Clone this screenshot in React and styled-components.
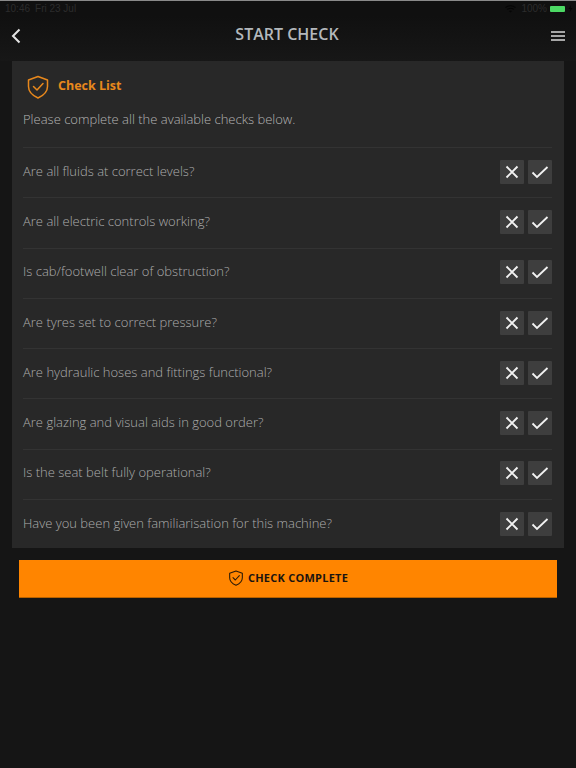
import React from "react";
import styled, { createGlobalStyle } from "styled-components";

const Global = createGlobalStyle`
  html, body { margin: 0; padding: 0; background: #151515; }
  #root { width: 576px; height: 768px; overflow: hidden; }
`;
const Page = styled.div`
  width: 576px; height: 768px; background: #151515; display: flex; flex-direction: column;
  font-family: "Open Sans", Lato, sans-serif; border-top: 1px solid #8a8a8a; box-sizing: border-box;
`;
const StatusBar = styled.div`
  height: 15px; padding: 0 3px 0 5px; display: flex; align-items: center; justify-content: space-between;
  font-family: "Liberation Sans", sans-serif; font-size: 10px; color: #2c2c2c; background: #101010;
`;
const StatusGroup = styled.div`display: flex; align-items: center; gap: 5px;`;
const TightGroup = styled.div`display: flex; align-items: center; gap: 3px;`;
const Battery = styled.span`
  width: 15px; height: 6px; background: #4cd964; border-radius: 1px; display: block;
`;
const Header = styled.header`
  height: 45px; display: flex; align-items: center; justify-content: space-between; padding: 0 7px 9px 5px;
  background: linear-gradient(#101010, #171717); box-sizing: border-box;
`;
const Title = styled.h1`
  margin: 0; font-size: 16px; font-weight: 600; color: #b4b8bc;
`;
const IconSlot = styled.div`width: 22px; height: 22px; display: flex; align-items: center; justify-content: center; margin-top: 4px;`;
const Card = styled.section`
  margin: 0 12px; height: 487px; flex: none; background: #282828; padding: 0 12px 0 11px; box-sizing: border-box;
  display: flex; flex-direction: column;
`;
const CardHead = styled.div`display: flex; flex: none; align-items: center; gap: 8px; height: 50px; padding: 2px 0 0 3px; box-sizing: border-box;`;
const CardTitle = styled.h2`margin: -3px 0 0; font-size: 12.5px; font-weight: 700; color: #e8881c;`;
const Intro = styled.p`
  margin: 0; height: 36px; flex: none; font-size: 13px; font-weight: 300; color: #b4b4b4; line-height: 17px;
  border-bottom: 1px solid #333; box-sizing: content-box;
`;
const Row = styled.div`
  height: 47.3px; padding-bottom: 2px; flex: none; display: flex; align-items: center; justify-content: space-between;
  border-bottom: ${p => (p.$last ? "none" : "1px solid #333")};
`;
const Question = styled.span`font-size: 13px; font-weight: 300; color: #acacac; padding-bottom: 2px;`;
const Actions = styled.div`display: flex; gap: 4px;`;
const Toggle = styled.button`
  width: 24px; height: 24px; padding: 0; border: 0; border-radius: 1px; background: #3e3e3e;
  display: flex; align-items: center; justify-content: center;
`;
const CompleteButton = styled.button`
  margin: 12px 19px 0; height: 38px; flex: none; border: 0; border-bottom: 1px solid #b86200; background: #ff8500;
  display: flex; align-items: center; justify-content: center; gap: 4px; padding: 0 0 2px;
  font-family: "Open Sans", sans-serif; font-weight: 700; font-size: 11px; letter-spacing: 0.25px; color: #1b1410;
`;

const Shield = ({ size, color, sw }) => (
  <svg width={size} height={size} viewBox="0 0 24 24" fill="none" stroke={color} strokeWidth={sw} strokeLinejoin="round" strokeLinecap="round">
    <path d="M12 1.5 L21.5 5 V11.5 C21.5 17 17.5 20.5 12 23 C6.5 20.5 2.5 17 2.5 11.5 V5 Z" />
    <path d="M7.5 11.5 L11 15 L17 8.5" />
  </svg>
);
const Cross = () => (
  <svg width="14" height="14" viewBox="0 0 14 14" stroke="#f2f2f2" strokeWidth="1.9" fill="none">
    <path d="M1.5 1.5 L12.5 12.5 M12.5 1.5 L1.5 12.5" />
  </svg>
);
const Tick = () => (
  <svg width="18" height="14" viewBox="0 0 18 14" stroke="#f2f2f2" strokeWidth="1.8" fill="none">
    <path d="M1.5 7.5 L6 12 L16.5 2" />
  </svg>
);

const questions = [
  "Are all fluids at correct levels?",
  "Are all electric controls working?",
  "Is cab/footwell clear of obstruction?",
  "Are tyres set to correct pressure?",
  "Are hydraulic hoses and fittings functional?",
  "Are glazing and visual aids in good order?",
  "Is the seat belt fully operational?",
  "Have you been given familiarisation for this machine?",
];

export default function App() {
  return (
    <Page>
      <Global />
      <StatusBar>
        <StatusGroup>
          <span>10:46</span>
          <span>Fri 23 Jul</span>
        </StatusGroup>
        <StatusGroup>
          <svg width="11" height="8" viewBox="0 0 11 8" fill="none" stroke="#050505" strokeWidth="1.2">
            <path d="M0.5 2.6 C3.2 0.1 7.8 0.1 10.5 2.6 M2.2 4.4 C4 2.9 7 2.9 8.8 4.4" />
            <path d="M5.5 7.6 L3.9 6 C4.8 5.3 6.2 5.3 7.1 6 Z" fill="#050505" stroke="none" />
          </svg>
          <TightGroup>
            <span>100%</span>
            <Battery />
            <svg width="5" height="7" viewBox="0 0 5 7" fill="#050505"><path d="M3 0 L0.5 4 H2.2 L1.8 7 L4.5 3 H2.7 Z" /></svg>
          </TightGroup>
        </StatusGroup>
      </StatusBar>
      <Header>
        <IconSlot>
          <svg width="12" height="16" viewBox="0 0 12 16" fill="none" stroke="#e4e4e4" strokeWidth="2"><path d="M9.5 1.5 L3 8 L9.5 14.5" /></svg>
        </IconSlot>
        <Title>START CHECK</Title>
        <IconSlot>
          <svg width="14" height="10" viewBox="0 0 14 10" stroke="#d8d8d8" strokeWidth="1.4"><path d="M0 1 H14 M0 5 H14 M0 9 H14" /></svg>
        </IconSlot>
      </Header>
      <Card>
        <CardHead>
          <Shield size={24} color="#e8881c" sw={1.5} />
          <CardTitle>Check List</CardTitle>
        </CardHead>
        <Intro>Please complete all the available checks below.</Intro>
        {questions.map((q, i) => (
          <Row key={q} $last={i === questions.length - 1}>
            <Question>{q}</Question>
            <Actions>
              <Toggle aria-label="No"><Cross /></Toggle>
              <Toggle aria-label="Yes"><Tick /></Toggle>
            </Actions>
          </Row>
        ))}
      </Card>
      <CompleteButton>
        <Shield size={16} color="#2a1a08" sw={1.6} />
        CHECK COMPLETE
      </CompleteButton>
    </Page>
  );
}
